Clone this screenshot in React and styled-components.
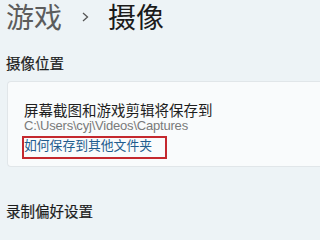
import React from 'react';
import styled, { createGlobalStyle } from 'styled-components';

const GlobalStyle = createGlobalStyle`
  html, body {
    margin: 0;
    padding: 0;
    background: #edf3f6;
    overflow: hidden;
  }
  body {
    font-family: 'Noto Sans CJK SC', sans-serif;
  }
`;

const Page = styled.div`
  width: 320px;
  height: 224px;
  padding: 0 0 0 6px;
  box-sizing: border-box;
  display: flex;
  flex-direction: column;
  overflow: hidden;
`;

const Breadcrumb = styled.div`
  display: flex;
  align-items: center;
  gap: 17px;
  height: 32px;
  font-size: 28px;
  line-height: 32px;
  font-weight: 400;
`;

const Crumb = styled.span`
  color: ${(p) => (p.current ? '#1b1b1b' : '#5c5c5c')};
`;

const Chevron = styled.svg`
  width: 12px;
  height: 12px;
  margin-top: 1px;
  color: #555;
`;

const SectionTitle = styled.div`
  margin-top: ${(p) => p.top}px;
  font-size: 14.5px;
  line-height: 18px;
  font-weight: 400;
  color: #1c1c1c;
  -webkit-text-stroke: 0.2px #1c1c1c;
`;

const Card = styled.div`
  margin-top: 9px;
  margin-left: 1px;
  height: 86px;
  box-sizing: border-box;
  background: #f9fbfc;
  border: 1px solid #e1e6e9;
  border-right: none;
  border-radius: 4px 0 0 4px;
  padding: 19px 0 0 16px;
  display: flex;
  flex-direction: column;
  align-items: flex-start;
`;

const Label = styled.div`
  font-size: 14.5px;
  line-height: 17px;
  color: #1e1e1e;
`;

const Path = styled.div`
  font-family: 'Liberation Sans', 'Noto Sans CJK SC', sans-serif;
  font-size: 13px;
  line-height: 15px;
  letter-spacing: -0.2px;
  color: #7a7a7a;
`;

const LinkBox = styled.a`
  display: block;
  margin: 3px 0 0 -2px;
  width: 145px;
  height: 23px;
  box-sizing: border-box;
  border: 2px solid #c4282e;
  padding: 0;
  font-size: 12.8px;
  line-height: 14px;
  color: #1f5d8e;
  text-decoration: none;
`;

export default function App() {
  return (
    <>
      <GlobalStyle />
      <Page>
        <Breadcrumb>
          <Crumb>游戏</Crumb>
          <Chevron viewBox="0 0 12 12" fill="none">
            <path d="M4 2 L8.5 6 L4 10" stroke="currentColor" strokeWidth="1.3" />
          </Chevron>
          <Crumb current>摄像</Crumb>
        </Breadcrumb>
        <SectionTitle top={22}>摄像位置</SectionTitle>
        <Card>
          <Label>屏幕截图和游戏剪辑将保存到</Label>
          <Path>C:\Users\cyj\Videos\Captures</Path>
          <LinkBox href="#">如何保存到其他文件夹</LinkBox>
        </Card>
        <SectionTitle top={35}>录制偏好设置</SectionTitle>
      </Page>
    </>
  );
}
